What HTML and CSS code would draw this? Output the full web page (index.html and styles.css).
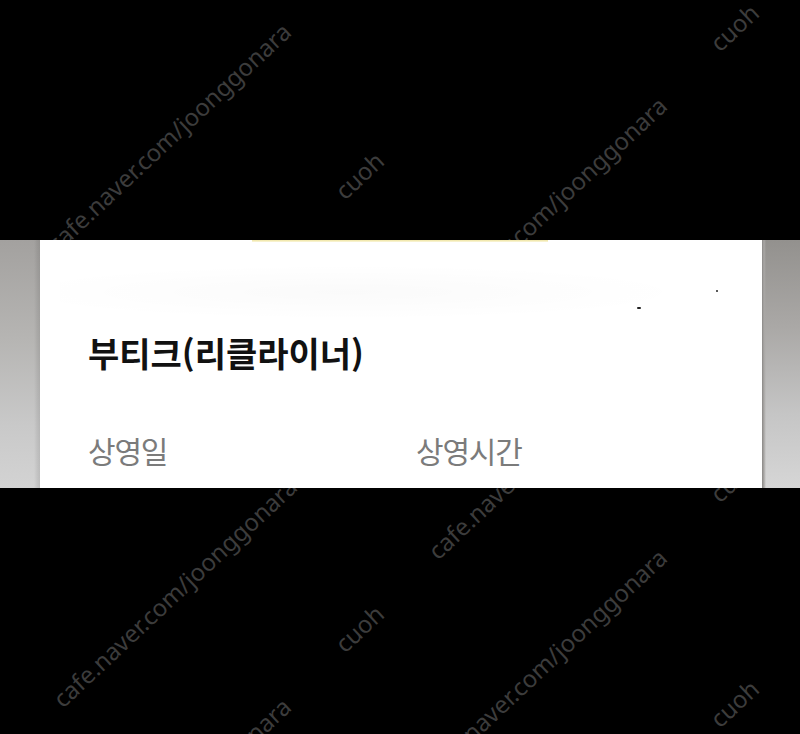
FILE: index.html
```html
<!DOCTYPE html>
<html lang="ko">
<head>
<meta charset="utf-8">
<title>부티크(리클라이너)</title>
<link rel="stylesheet" href="styles.css">
</head>
<body>
<div class="screen">
  <div class="watermarks" aria-hidden="true">
    <span class="wm wm-url wm-a">cafe.naver.com/joonggonara</span>
    <span class="wm wm-url wm-c">cafe.naver.com/joonggonara</span>
    <span class="wm wm-url wm-e">cafe.naver.com/joonggonara</span>
    <span class="wm wm-url wm-g">cafe.naver.com/joonggonara</span>
    <span class="wm wm-url wm-h">cafe.naver.com/joonggonara</span>
    <span class="wm wm-url wm-i">cafe.naver.com/joonggonara</span>
    <span class="wm wm-tag wm-b">cuoh</span>
    <span class="wm wm-tag wm-d">cuoh</span>
    <span class="wm wm-tag wm-f">cuoh</span>
    <span class="wm wm-tag wm-j">cuoh</span>
    <span class="wm wm-tag wm-k">cuoh</span>
  </div>

  <section class="band">
    <div class="edge edge-left"></div>
    <div class="card">
      <div class="highlight"></div>
      <div class="haze"></div>
      <span class="speck speck-1"></span>
      <span class="speck speck-2"></span>
      <h1 class="title">부티크(리클라이너)</h1>
      <div class="labels">
        <span class="label">상영일</span>
        <span class="label">상영시간</span>
      </div>
    </div>
    <div class="edge edge-right"></div>
  </section>
</div>
</body>
</html>
```

FILE: styles.css
```css
html, body {
  margin: 0;
  padding: 0;
  background: #000;
}

.screen {
  position: relative;
  width: 800px;
  height: 734px;
  overflow: hidden;
  background: #000;
  padding-top: 240px;
  box-sizing: border-box;
}

.watermarks {
  position: absolute;
  inset: 0;
  z-index: 0;
}

.wm {
  position: absolute;
  font-family: "Noto Sans", "Open Sans", sans-serif;
  font-size: 24px;
  line-height: 1;
  color: #3c3c3c;
  white-space: nowrap;
  transform-origin: 0 21px;
  transform: rotate(-43deg);
}

.wm-a { left: 57px;  top: 233px; }
.wm-c { left: 433px; top: 307px; }
.wm-e { left: 63px;  top: 688px; }
.wm-g { left: 57px;  top: 908px; }
.wm-h { left: 438px; top: 540px; }
.wm-i { left: 433px; top: 759px; }

.wm-b { left: 345px; top: 180px; }
.wm-d { left: 720px; top: 32px; }
.wm-f { left: 345px; top: 633px; }
.wm-j { left: 720px; top: 708px; }
.wm-k { left: 720px; top: 483px; }

.band {
  position: relative;
  z-index: 1;
  display: flex;
  height: 248px;
}

.edge {
  flex: none;
}

.edge-left {
  width: 40px;
  background:
    linear-gradient(to right, rgba(0,0,0,0) 0, rgba(0,0,0,0) 34px, rgba(0,0,0,0.06) 37px, rgba(0,0,0,0.1) 40px),
    linear-gradient(to bottom, #a3a19f 0%, #b6b5b3 40%, #c9c9c9 75%, #d3d3d3 100%);
}

.edge-right {
  width: 38px;
  background:
    linear-gradient(to right, #8a8886 0, #a9a7a5 2px, rgba(0,0,0,0) 4px),
    linear-gradient(to bottom, #93918e 0%, #aaa8a6 35%, #c5c5c5 70%, #d6d6d6 100%);
}

.card {
  position: relative;
  flex: 1;
  background: #fff;
  padding: 93px 0 0 48px;
  box-sizing: border-box;
}

.highlight {
  position: absolute;
  left: 212px;
  top: 0;
  width: 296px;
  height: 2px;
  background: linear-gradient(to bottom, #efe4a2, #faf6dc);
}

.haze {
  position: absolute;
  left: 20px;
  top: 24px;
  width: 640px;
  height: 56px;
  background: radial-gradient(ellipse at 45% 50%, rgba(0,0,0,0.018), rgba(0,0,0,0) 70%);
}

.speck {
  position: absolute;
  background: #222;
  border-radius: 1px;
}

.speck-1 { left: 597px; top: 67px; width: 4px; height: 2px; }
.speck-2 { left: 676px; top: 50px; width: 2px; height: 2px; }

.title {
  margin: 0;
  font-family: "Noto Sans CJK KR", "Noto Sans", sans-serif;
  font-weight: 700;
  font-size: 34px;
  line-height: 40px;
  letter-spacing: 0;
  color: #111;
}

.labels {
  display: grid;
  grid-template-columns: 328px 1fr;
  margin-top: 57px;
}

.label {
  font-family: "Noto Sans CJK KR", "Noto Sans", sans-serif;
  font-weight: 400;
  font-size: 30px;
  line-height: 40px;
  letter-spacing: -1.2px;
  color: #7b7b7b;
}
```
